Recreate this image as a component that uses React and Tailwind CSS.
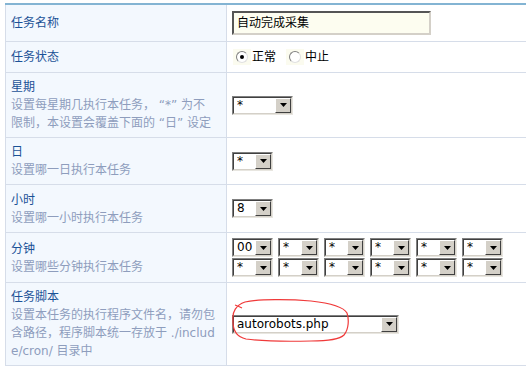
import React from "react";

const font = { fontFamily: '"DejaVu Sans", "Noto Sans CJK SC", sans-serif' };

function Arrow() {
  return (
    <span className="flex w-[16px] items-center justify-center border border-t-[#ffffff] border-l-[#ffffff] border-b-[#404040] border-r-[#404040] bg-[#d4d0c8]">
      <svg width="7" height="4" viewBox="0 0 7 4">
        <path d="M0 0h7L3.5 4z" fill="#000" />
      </svg>
    </span>
  );
}

function Select({ value, width }) {
  return (
    <div className={`flex h-[19px] shrink-0 border border-t-[#808080] border-l-[#808080] border-b-[#e8e6e0] border-r-[#e8e6e0] ${width}`}>
      <div className="flex flex-1 border border-t-[#404040] border-l-[#404040] border-b-[#d4d0c8] border-r-[#d4d0c8] bg-white">
        <span className="flex-1 pl-[3px] text-[12px] leading-[15px] text-black">{value}</span>
        <Arrow />
      </div>
    </div>
  );
}

function Radio({ checked, label }) {
  return (
    <label className="flex items-center">
      <span className="flex h-[16px] w-[18px] items-center justify-center bg-[#fbfbef]">
        <span className="flex h-[12px] w-[12px] items-center justify-center rounded-full border border-t-[#808080] border-l-[#808080] border-b-[#e0e0e0] border-r-[#e0e0e0] bg-white">
          {checked && <span className="h-[4px] w-[4px] rounded-full bg-black" />}
        </span>
      </span>
      <span className="ml-[1px] text-[12px] text-black">{label}</span>
    </label>
  );
}

function Row({ height, left, children }) {
  return (
    <div className={`flex border-b border-[#d6dde9] ${height}`}>
      <div className="flex w-[222px] shrink-0 flex-col justify-center border-l border-r border-[#d6dde9] bg-[#f3f8fe] pl-[5px] text-[12px] leading-[18px]">
        {left}
      </div>
      <div className="flex flex-1 items-center pl-[5px]">{children}</div>
    </div>
  );
}

const Title = ({ children }) => <div className="text-[#1b5297]">{children}</div>;
const Desc = ({ children }) => <div className="text-[#8e9dbd]">{children}</div>;

export default function App() {
  const minutes = ["00", "*", "*", "*", "*", "*"];
  return (
    <div className="h-[372px] w-[526px] overflow-hidden bg-white pt-[3px] pl-[5px]" style={font}>
      <div className="border-t-2 border-[#83b4d3]">
        <Row height="h-[37px]" left={<Title>任务名称</Title>}>
          <div className="flex h-[24px] w-[199px] items-center border-2 border-t-[#555555] border-l-[#555555] border-b-[#d4d0c8] border-r-[#d4d0c8] bg-[#fdfdf0] pl-[3px] text-[12px] text-black">
            自动完成采集
          </div>
        </Row>

        <Row height="h-[31px]" left={<Title>任务状态</Title>}>
          <div className="flex items-center gap-[10px] pl-[1px]">
            <Radio checked label="正常" />
            <Radio label="中止" />
          </div>
        </Row>

        <Row
          height="h-[65px]"
          left={
            <>
              <Title>星期</Title>
              <Desc>
                设置每星期几执行本任务， “*” 为不
                <br />
                限制，本设置会覆盖下面的 “日” 设定
              </Desc>
            </>
          }
        >
          <Select value="*" width="w-[61px]" />
        </Row>

        <Row
          height="h-[47px]"
          left={
            <>
              <Title>日</Title>
              <Desc>设置哪一日执行本任务</Desc>
            </>
          }
        >
          <Select value="*" width="w-[41px]" />
        </Row>

        <Row
          height="h-[48px]"
          left={
            <>
              <Title>小时</Title>
              <Desc>设置哪一小时执行本任务</Desc>
            </>
          }
        >
          <Select value="8" width="w-[41px]" />
        </Row>

        <Row
          height="h-[50px]"
          left={
            <>
              <Title>分钟</Title>
              <Desc>设置哪些分钟执行本任务</Desc>
            </>
          }
        >
          <div className="flex flex-col gap-[1px]">
            <div className="flex gap-[5px]">
              {minutes.map((m, i) => (
                <Select key={i} value={m} width="w-[41px]" />
              ))}
            </div>
            <div className="flex gap-[5px]">
              {minutes.map((_, i) => (
                <Select key={i} value="*" width="w-[41px]" />
              ))}
            </div>
          </div>
        </Row>

        <Row
          height="h-[83px]"
          left={
            <>
              <Title>任务脚本</Title>
              <Desc>
                设置本任务的执行程序文件名，请勿包
                <br />
                含路径，程序脚本统一存放于 ./includ
                <br />
                e/cron/ 目录中
              </Desc>
            </>
          }
        >
          <div className="relative">
            <Select value="autorobots.php" width="w-[167px]" />
            <svg
              className="pointer-events-none absolute left-[-1px] top-[-16px]"
              width="119"
              height="44"
              viewBox="0 0 119 44"
            >
              <path
                d="M2 21C1 13 5 6 14 3C28 0 58 0 80 2C98 4 112 7 116 14C118 20 118 30 113 36C108 41 95 42 80 42C60 42.5 30 42 15 40C6 38 1.5 32 2 21ZM4 6C7 7 9 8 11 9"
                fill="none"
                stroke="#f03a3a"
                strokeWidth="1.2"
              />
            </svg>
          </div>
        </Row>
      </div>
    </div>
  );
}
